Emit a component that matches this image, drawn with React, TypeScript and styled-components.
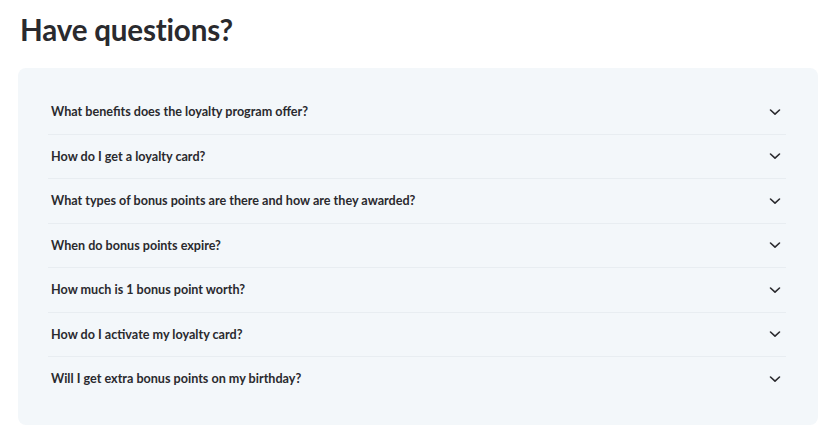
import React from "react";
import styled, { createGlobalStyle } from "styled-components";

const Global = createGlobalStyle`
  html, body { margin: 0; padding: 0; background: #ffffff; }
  body { font-family: Lato, "Open Sans", sans-serif; color: #2a2a2e; }
`;

const Page = styled.div`
  padding: 12px 18px 0 18px;
  width: 800px;
`;

const Title = styled.h2`
  margin: 0 0 0 2px;
  font-size: 29.6px;
  line-height: 36px;
  font-weight: 700;
  letter-spacing: -0.2px;
  color: #2a2a2e;
`;

const Card = styled.div`
  margin-top: 20px;
  background: #f3f7fa;
  border-radius: 8px;
  padding: 22px 32px 23px 30px;
`;

const Row = styled.div<{ $last?: boolean }>`
  display: flex;
  align-items: center;
  justify-content: space-between;
  height: 43.5px;
  border-bottom: 1px solid ${(p) => (p.$last ? "transparent" : "#e8edf1")};
  padding: 0 0 0 3px;
`;

const Question = styled.span`
  font-size: 12.6px;
  font-weight: 700;
  color: #2a2a2e;
`;

const Chevron = styled.svg`
  width: 12px;
  height: 12px;
  margin-right: 5px;
  flex: none;
`;

const questions = [
  "What benefits does the loyalty program offer?",
  "How do I get a loyalty card?",
  "What types of bonus points are there and how are they awarded?",
  "When do bonus points expire?",
  "How much is 1 bonus point worth?",
  "How do I activate my loyalty card?",
  "Will I get extra bonus points on my birthday?",
];

export default function App() {
  return (
    <>
      <Global />
      <Page>
        <Title>Have questions?</Title>
        <Card>
          {questions.map((q, i) => (
            <Row key={q} $last={i === questions.length - 1}>
              <Question>{q}</Question>
              <Chevron viewBox="0 0 12 12" fill="none">
                <path d="M1.5 4 L6 8.2 L10.5 4" stroke="#2a2a2e" strokeWidth="1.6" strokeLinecap="round" strokeLinejoin="round" />
              </Chevron>
            </Row>
          ))}
        </Card>
      </Page>
    </>
  );
}
